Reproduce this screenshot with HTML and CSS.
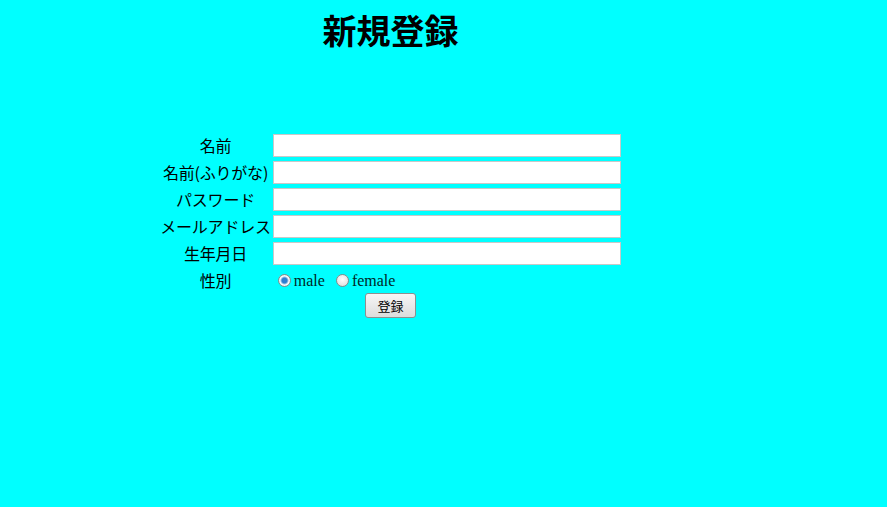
FILE: index.html
```html
<!DOCTYPE html>
<html lang="ja">
<head>
<meta charset="utf-8">
<title>新規登録</title>
<link rel="stylesheet" href="styles.css">
</head>
<body>
<div class="page">
  <h1 class="title">新規登録</h1>
  <form class="form">
    <table class="form-table">
      <tr><th class="label">名前</th><td><input class="field" type="text"></td></tr>
      <tr><th class="label">名前(ふりがな)</th><td><input class="field" type="text"></td></tr>
      <tr><th class="label">パスワード</th><td><input class="field" type="password"></td></tr>
      <tr><th class="label">メールアドレス</th><td><input class="field" type="text"></td></tr>
      <tr><th class="label">生年月日</th><td><input class="field" type="text"></td></tr>
      <tr><th class="label">性別</th><td class="radios"><label class="opt"><input class="radio" type="radio" name="g" checked>male</label><label class="opt"><input class="radio" type="radio" name="g">female</label></td></tr>
      <tr><td class="submit-cell" colspan="2"><button class="submit" type="button">登録</button></td></tr>
    </table>
  </form>
</div>
</body>
</html>
```
FILE: styles.css
```css
html, body {
  margin: 0;
  padding: 0;
  background: #00ffff;
}
body {
  font-family: "Liberation Serif", serif;
  font-size: 16px;
  color: #000;
}
.page {
  width: 781px;
}
.title {
  margin: 0;
  padding-top: 10px;
  text-align: center;
  font-family: "Noto Sans CJK JP", sans-serif;
  font-size: 34px;
  font-weight: bold;
  line-height: 40px;
}
.form {
  margin-top: 81px;
}
.form-table {
  margin: 0 auto;
  border-collapse: separate;
  border-spacing: 2px;
}
.label {
  width: 110px;
  padding: 0;
  text-align: center;
  font-family: "Noto Sans CJK JP", sans-serif;
  font-weight: normal;
  font-size: 16px;
  line-height: 25px;
  white-space: nowrap;
  letter-spacing: -0.2px;
}
.form-table td {
  padding: 0;
}
.field {
  display: block;
  box-sizing: border-box;
  width: 348px;
  height: 23px;
  margin: 1px 0;
  border: 1px solid #c8c8c8;
  background: #fff;
  padding: 0 2px;
}
.radios {
  height: 25px;
  line-height: 25px;
  color: #002828;
}
.opt {
  margin-right: 6px;
}
.radio {
  appearance: none;
  -webkit-appearance: none;
  box-sizing: border-box;
  margin: 0 3px 0 5px;
  width: 13px;
  height: 13px;
  border: 1px solid #8a8a8a;
  border-radius: 50%;
  background: radial-gradient(circle at 50% 40%, #ffffff, #d8d8d8);
  vertical-align: -1px;
}
.radio:checked {
  background: radial-gradient(circle, #2f7fd0 0, #2f7fd0 2.5px, #9cc4e8 3.5px, #ffffff 4.5px, #dcdcdc 6px);
}
.submit-cell {
  padding: 0;
}
.submit {
  display: block;
  margin: -2px auto 0;
  width: 51px;
  height: 25px;
  font-family: "Noto Sans CJK JP", sans-serif;
  font-size: 13px;
  padding: 0;
  border: 1px solid #8f8f8f;
  border-radius: 3px;
  background: linear-gradient(#f6f6f6, #dcdcdc);
  color: #000;
}
```
